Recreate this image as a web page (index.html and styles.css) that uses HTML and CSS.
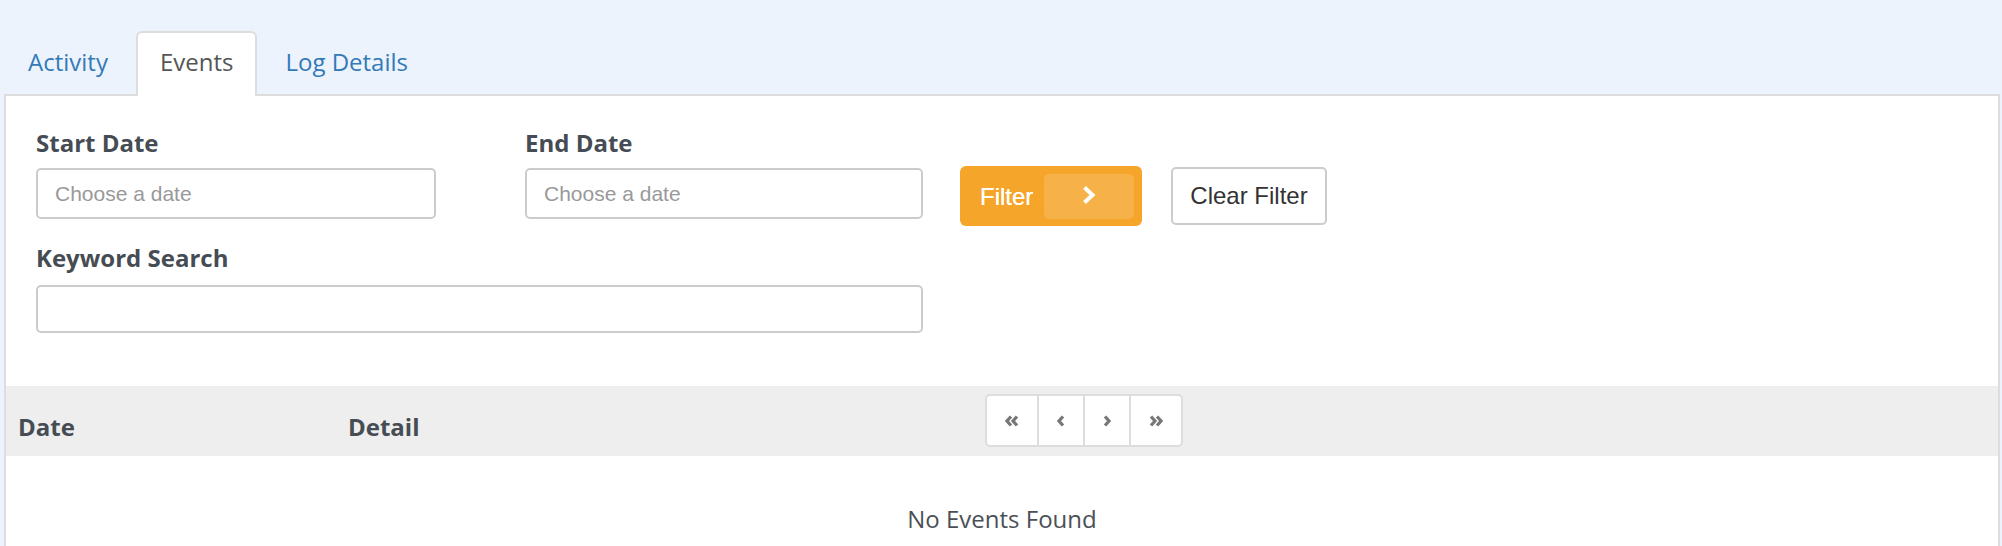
FILE: index.html
```html
<!DOCTYPE html>
<html>
<head>
<meta charset="utf-8">
<link rel="stylesheet" href="styles.css">
</head>
<body>
<div class="page">
  <ul class="tabs">
    <li class="tab"><a href="#">Activity</a></li>
    <li class="tab active"><a href="#">Events</a></li>
    <li class="tab"><a href="#">Log Details</a></li>
  </ul>
  <div class="panel">
    <form class="filters">
      <div class="row">
        <div class="field field-start">
          <label class="label">Start Date</label>
          <input class="input" type="text" placeholder="Choose a date">
        </div>
        <div class="field field-end">
          <label class="label">End Date</label>
          <input class="input" type="text" placeholder="Choose a date">
        </div>
        <button type="button" class="btn-filter">
          <span>Filter</span>
          <span class="btn-filter-icon">
            <svg width="16" height="22" viewBox="0 0 16 22"><polyline points="3.5,3.5 11.5,11 3.5,18.5" fill="none" stroke="#fff" stroke-width="4"/></svg>
          </span>
        </button>
        <button type="button" class="btn-clear">Clear Filter</button>
      </div>
      <div class="field field-keyword">
        <label class="label">Keyword Search</label>
        <input class="input input-keyword" type="text">
      </div>
    </form>
    <div class="table-head">
      <div class="th th-date">Date</div>
      <div class="th th-detail">Detail</div>
      <ul class="pager">
        <li class="pg pg-wide"><svg width="14" height="12" viewBox="0 0 14 12"><polyline points="6,1.5 2,6 6,10.5" fill="none" stroke="#777" stroke-width="3.2"/><polyline points="12,1.5 8,6 12,10.5" fill="none" stroke="#777" stroke-width="3.2"/></svg></li>
        <li class="pg"><svg width="8" height="12" viewBox="0 0 8 12"><polyline points="6,1.5 2,6 6,10.5" fill="none" stroke="#777" stroke-width="3.2"/></svg></li>
        <li class="pg"><svg width="8" height="12" viewBox="0 0 8 12"><polyline points="2,1.5 6,6 2,10.5" fill="none" stroke="#777" stroke-width="3.2"/></svg></li>
        <li class="pg pg-wide"><svg width="14" height="12" viewBox="0 0 14 12"><polyline points="2,1.5 6,6 2,10.5" fill="none" stroke="#777" stroke-width="3.2"/><polyline points="8,1.5 12,6 8,10.5" fill="none" stroke="#777" stroke-width="3.2"/></svg></li>
      </ul>
    </div>
    <div class="empty">No Events Found</div>
  </div>
</div>
</body>
</html>
```
FILE: styles.css
```css
* { box-sizing: border-box; }
html, body { margin: 0; padding: 0; }
body {
  background: #edf3fd;
  font-family: "Open Sans", "Liberation Sans", sans-serif;
  height: 546px;
  overflow: hidden;
}
.page {
  padding: 0 2px 0 4px;
}
.tabs {
  list-style: none;
  margin: 0;
  padding: 31px 0 0 0;
  display: flex;
  align-items: flex-end;
  border-bottom: 2px solid #dddddd;
}
.tab {
  margin-right: 4px;
  border: 2px solid transparent;
  border-bottom: 0;
  border-radius: 6px 6px 0 0;
  padding: 12px 22px 15px;
  font-size: 24px;
  line-height: 34px;
}
.tab a {
  color: #337ab7;
  text-decoration: none;
}
.tab.active {
  background: #fff;
  border-color: #dddddd;
  margin-bottom: -2px;
  padding-bottom: 17px;
}
.tab.active a { color: #555555; }

.panel {
  background: #fff;
  border: 2px solid #dddddd;
  border-top: 0;
  height: 460px;
}
.filters {
  padding: 30px 30px 53px 30px;
}
.row {
  display: flex;
  align-items: flex-start;
}
.field {
  display: flex;
  flex-direction: column;
}
.field-start { width: 400px; margin-right: 89px; }
.field-end { width: 398px; margin-right: 37px; }
.field-keyword { width: 887px; margin-top: 15px; }
.label {
  font-weight: 700;
  font-size: 24px;
  line-height: 34px;
  color: #464c53;
  margin-bottom: 8px;
}
.field-keyword .label { margin-bottom: 10px; }
.input {
  height: 51px;
  border: 2px solid #cccccc;
  border-radius: 5px;
  padding: 0 17px;
  font-family: "Liberation Sans", Arial, sans-serif;
  font-size: 21px;
  color: #555;
  background: #fff;
  outline: none;
}
.input-keyword { height: 48px; }
.input::placeholder { color: #999999; }

.btn-filter {
  margin-top: 40px;
  display: flex;
  align-items: center;
  gap: 11px;
  padding: 8px 8px 7px 20px;
  background: #f5a62a;
  border: 0;
  border-radius: 6px;
  color: #fff;
  font-family: "Liberation Sans", Arial, sans-serif;
  font-size: 24px;
  line-height: 28px;
  text-shadow: 0 0 0.6px #fff;
}
.btn-filter-icon {
  width: 90px;
  height: 45px;
  border-radius: 5px;
  background: rgba(255, 255, 255, 0.14);
  display: flex;
  align-items: center;
  justify-content: center;
}
.btn-filter-icon svg { display: block; margin-top: -3px; }
.btn-clear {
  margin-top: 41px;
  margin-left: 29px;
  height: 58px;
  padding: 0 17px;
  background: #fff;
  border: 2px solid #cccccc;
  border-radius: 5px;
  color: #333;
  font-family: "Liberation Sans", Arial, sans-serif;
  font-size: 24px;
}

.table-head {
  display: flex;
  align-items: flex-start;
  height: 70px;
  background: #eeeeee;
}
.th {
  padding: 24px 12px 0 12px;
  font-weight: 700;
  font-size: 24px;
  line-height: 34px;
  color: #464c53;
}
.th-date { width: 330px; }
.th-detail { width: 649px; }
.pager {
  list-style: none;
  margin: 8px 0 0 0;
  padding: 0;
  display: flex;
}
.pg {
  width: 48px;
  height: 53px;
  margin-left: -2px;
  background: #fff;
  border: 2px solid #dddddd;
  display: flex;
  align-items: center;
  justify-content: center;
}
.pg svg { display: block; }
.pg-wide { width: 54px; }
.pg:first-child { margin-left: 0; border-radius: 5px 0 0 5px; }
.pg:last-child { border-radius: 0 5px 5px 0; }
.empty {
  margin-top: 46px;
  text-align: center;
  font-size: 24px;
  line-height: 34px;
  color: #4b5056;
}
```
